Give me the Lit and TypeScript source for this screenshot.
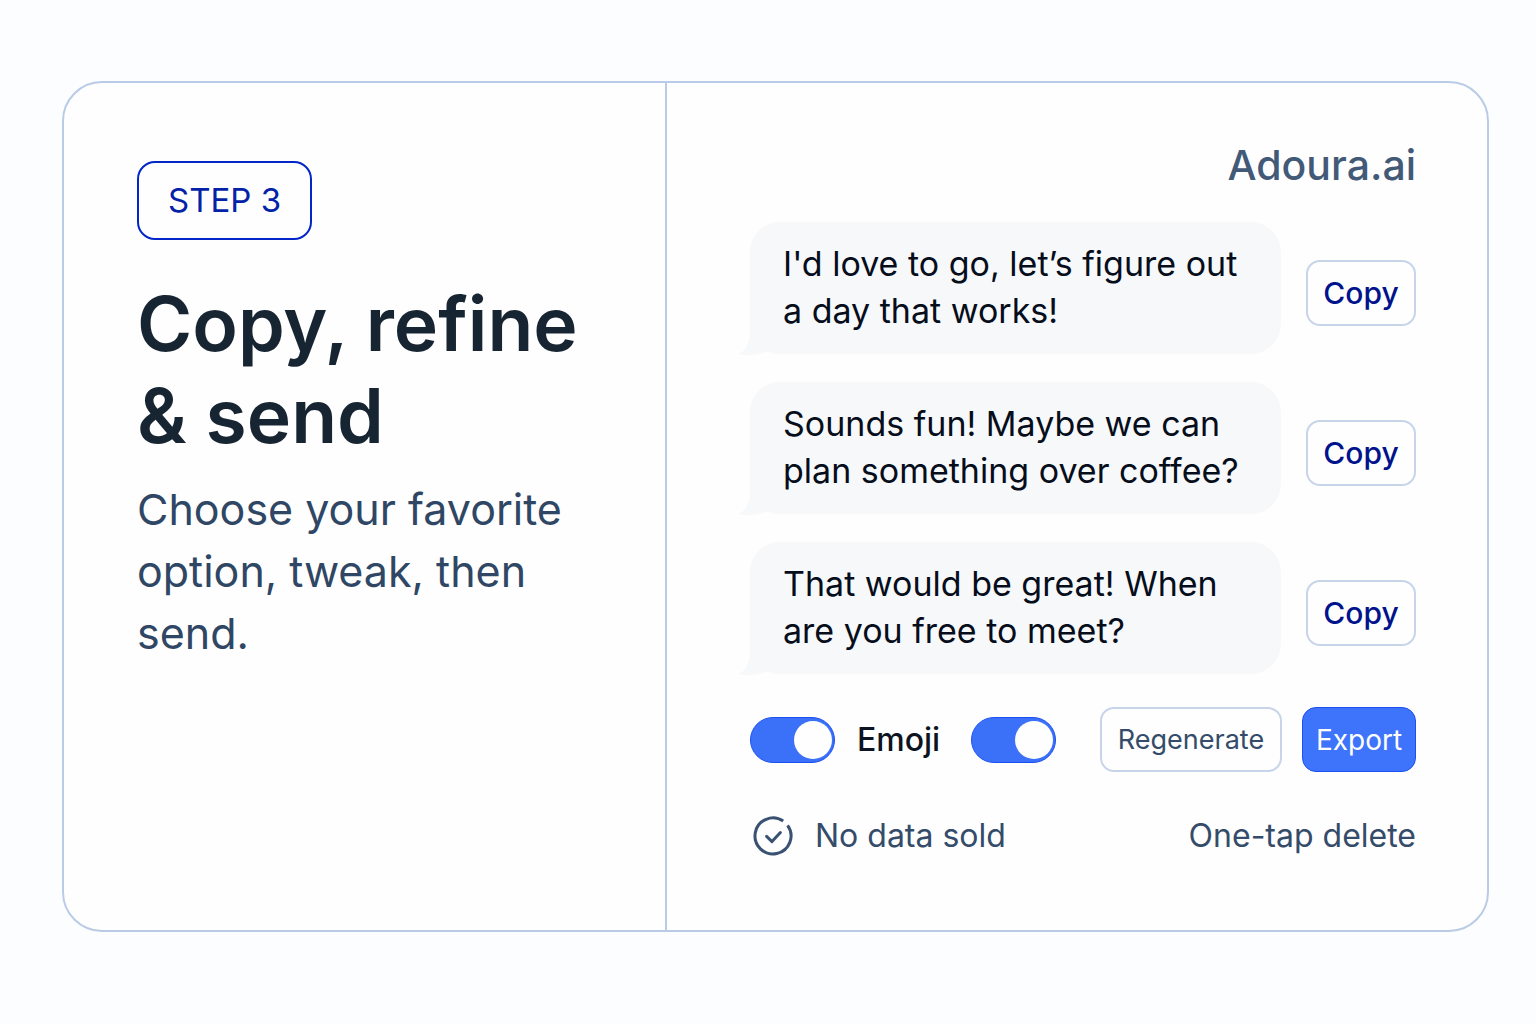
import { LitElement, html, css, svg } from "lit";
import { customElement, property } from "lit/decorators.js";

const checkIcon = svg`
  <path d="M30.2 5.1A18 18 0 1 0 34.6 9.4" />
  <path class="tick" d="M13.6 20.4l5.4 5.2 8.4-9" />
`;

@customElement("reply-option")
class ReplyOption extends LitElement {
  @property() text = "";

  static styles = css`
    :host {
      display: flex;
      align-items: center;
      gap: 25px;
    }
    .bubble {
      position: relative;
      flex: 1;
      box-sizing: border-box;
      min-height: 132px;
      margin: 0;
      padding: 18px 30px 20px 33px;
      border-radius: 30px;
      background: #f7f8fa;
      color: #060d1b;
      font-size: 34px;
      line-height: 47px;
    }
    .tail {
      position: absolute;
      left: -11px;
      bottom: -2px;
      width: 40px;
      height: 40px;
      fill: #f7f8fa;
    }
    .words {
      position: relative;
    }
    .copy {
      box-sizing: border-box;
      width: 110px;
      height: 66px;
      margin-top: 10px;
      padding: 0;
      border: 2px solid #c8d4ea;
      border-radius: 14px;
      background: #fefefe;
      color: #00128c;
      font: 500 30px/38px Inter, "Liberation Sans", sans-serif;
      cursor: pointer;
    }
  `;

  render() {
    return html`
      <p class="bubble">
        <svg class="tail" viewBox="0 0 40 40" aria-hidden="true">
          <path d="M11 0V18Q10 32 0 38.5Q17 41 28 35.5Q32 35 36 38H40V0Z" />
        </svg>
        <span class="words">${this.text}</span>
      </p>
      <button class="copy" type="button">Copy</button>
    `;
  }
}

@customElement("app-root")
class AppRoot extends LitElement {
  private replies = [
    "I'd love to go, let’s figure out a day that works!",
    "Sounds fun! Maybe we can plan something over coffee?",
    "That would be great! When are you free to meet?",
  ];

  static styles = css`
    :host {
      display: grid;
      box-sizing: border-box;
      min-height: 100vh;
      padding: 81px 47px 92px 62px;
      background: #fcfdfe;
      font-family: Inter, "Liberation Sans", sans-serif;
    }
    .card {
      display: grid;
      grid-template-columns: 603fr 820fr;
      border: 2px solid #b9cbe6;
      border-radius: 40px;
      background: #fefefe;
    }
    .intro {
      padding: 78px 73px;
      border-right: 2px solid #b9cbe6;
    }
    .step {
      display: inline-block;
      padding: 18px 29px;
      border: 2px solid #0226c8;
      border-radius: 18px;
      color: #0322a8;
      font-size: 33px;
      line-height: 39px;
    }
    .title {
      margin: 38px 0 0;
      color: #172432;
      font-size: 75px;
      font-weight: 600;
      line-height: 92px;
    }
    .lead {
      margin: 16px 0 0;
      color: #2f4765;
      font-size: 43px;
      line-height: 62px;
    }
    .panel {
      display: flex;
      flex-direction: column;
      padding: 54px 71px 60px 83px;
    }
    .brand {
      margin-bottom: 29px;
      color: #425a78;
      font-size: 41px;
      font-weight: 500;
      line-height: 56px;
      text-align: right;
    }
    .replies {
      display: flex;
      flex-direction: column;
      gap: 28px;
    }
    .actions {
      display: flex;
      align-items: center;
      margin-top: 33px;
    }
    .toggle {
      display: flex;
      align-items: center;
      gap: 22px;
      margin-right: 31px;
      color: #0c1422;
      font-size: 32px;
      font-weight: 500;
    }
    .switch {
      appearance: none;
      box-sizing: border-box;
      display: flex;
      justify-content: flex-end;
      align-items: center;
      width: 85px;
      height: 46px;
      margin: 0;
      padding: 0 2px;
      border: 1px solid #1c50f2;
      border-radius: 23px;
      background: #3b70f8;
      cursor: pointer;
    }
    .switch::before {
      content: "";
      width: 38px;
      height: 38px;
      border-radius: 50%;
      background: #fefefe;
    }
    .switch:not(:checked) {
      justify-content: flex-start;
      border-color: #a9b6cc;
      background: #b9c5d8;
    }
    .button {
      box-sizing: border-box;
      height: 65px;
      padding: 0;
      border: 2px solid #c8d4ea;
      border-radius: 14px;
      background: #fefefe;
      color: #344c6a;
      font: 400 28px/36px Inter, "Liberation Sans", sans-serif;
      cursor: pointer;
    }
    .regenerate {
      width: 182px;
      margin-left: auto;
      font-size: 27px;
    }
    .export {
      width: 114px;
      margin-left: 20px;
      border: 1px solid #1c50f2;
      background: #3d74fb;
      color: #fff;
    }
    .notes {
      display: flex;
      align-items: center;
      justify-content: space-between;
      margin-top: 44px;
      color: #344c6a;
      font-size: 32px;
      line-height: 40px;
    }
    .note {
      display: flex;
      align-items: center;
      gap: 22px;
    }
    .check {
      width: 40px;
      height: 40px;
      margin-left: 3px;
      fill: none;
      stroke: #3a5272;
      stroke-width: 3;
      stroke-linejoin: round;
    }
    .tick {
      stroke-linecap: round;
    }
  `;

  render() {
    return html`
      <main class="card">
        <section class="intro">
          <span class="step">STEP 3</span>
          <h1 class="title">Copy, refine<br />&amp; send</h1>
          <p class="lead">Choose your favorite option, tweak, then send.</p>
        </section>
        <section class="panel">
          <div class="brand">Adoura.ai</div>
          <div class="replies">
            ${this.replies.map((r) => html`<reply-option .text=${r}></reply-option>`)}
          </div>
          <div class="actions">
            <label class="toggle">
              <input class="switch" type="checkbox" role="switch" checked />
              Emoji
            </label>
            <input class="switch" type="checkbox" role="switch" aria-label="Tone" checked />
            <button class="button regenerate" type="button">Regenerate</button>
            <button class="button export" type="button">Export</button>
          </div>
          <div class="notes">
            <span class="note">
              <svg class="check" viewBox="0 0 40 40" aria-hidden="true">${checkIcon}</svg>
              No data sold
            </span>
            <span>One-tap delete</span>
          </div>
        </section>
      </main>
    `;
  }
}
